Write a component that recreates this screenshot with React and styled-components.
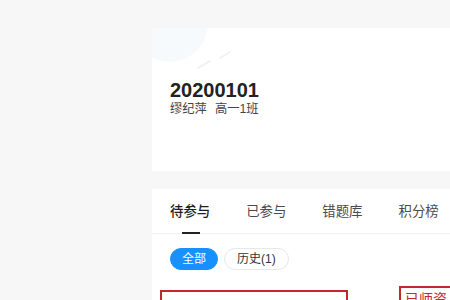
import React from 'react';
import styled, { createGlobalStyle } from 'styled-components';

const GlobalStyle = createGlobalStyle`
  html, body {
    margin: 0;
    padding: 0;
    background: #f7f7f7;
    font-family: 'Liberation Sans', 'Noto Sans CJK SC', sans-serif;
  }
`;

const Page = styled.div`
  width: 450px;
  height: 300px;
  overflow: hidden;
  padding: 28px 0 0 152px;
  box-sizing: border-box;
  display: flex;
  flex-direction: column;
  gap: 18px;
`;

const ProfileCard = styled.section`
  flex: none;
  position: relative;
  height: 143px;
  background: #fff;
  padding: 51px 0 0 18px;
  box-sizing: border-box;
  overflow: hidden;
`;

const Decoration = styled.svg`
  position: absolute;
  left: 0;
  top: 0;
  pointer-events: none;
`;

const Title = styled.h1`
  position: relative;
  margin: 0;
  font-size: 20px;
  line-height: 22px;
  font-weight: 700;
  color: #222;
`;

const Meta = styled.div`
  position: relative;
  display: flex;
  gap: 8px;
  font-size: 12.3px;
  line-height: 16px;
  color: #444;
`;

const ListCard = styled.section`
  flex: none;
  height: 200px;
  background: #fff;
  display: flex;
  flex-direction: column;
`;

const Tabs = styled.nav`
  display: flex;
  gap: 36px;
  height: 44px;
  padding-left: 18px;
  border-bottom: 1px solid #f0f0f0;
`;

const Tab = styled.div`
  position: relative;
  font-size: 13.4px;
  line-height: 45px;
  color: ${p => (p.$active ? '#1f1f1f' : '#4a4a4a')};
  font-weight: ${p => (p.$active ? 500 : 400)};

  &::after {
    content: '';
    display: ${p => (p.$active ? 'block' : 'none')};
    position: absolute;
    left: 12px;
    bottom: -1px;
    width: 18px;
    height: 2px;
    background: #222;
  }
`;

const Filters = styled.div`
  display: flex;
  gap: 6px;
  padding: 14px 0 0 18px;
`;

const Chip = styled.button`
  height: 22px;
  padding: 0 ${p => (p.$active ? '11px' : '12px')};
  border-radius: 11px;
  border: 1px solid ${p => (p.$active ? '#1890ff' : '#e8e8e8')};
  background: ${p => (p.$active ? '#1890ff' : '#fff')};
  color: ${p => (p.$active ? '#fff' : '#333')};
  font-family: inherit;
  font-size: 12px;
  line-height: 20px;
  box-sizing: border-box;
`;

const Items = styled.div`
  display: flex;
  align-items: flex-start;
  gap: 51px;
  padding: 16px 0 0 8px;
`;

const Item = styled.div`
  flex: none;
  width: ${p => p.$width}px;
  height: 60px;
  margin-top: ${p => p.$offset || 0}px;
  border: 2px solid #c0282d;
  box-sizing: border-box;
  padding: 1px 4px;
  font-size: 14px;
  line-height: 20px;
  color: #c0282d;
  white-space: nowrap;
`;

export default function App() {
  return (
    <>
      <GlobalStyle />
      <Page>
        <ProfileCard>
          <Decoration width="120" height="60" viewBox="0 0 120 60">
            <circle cx="18" cy="-4" r="38" fill="#f1f6fa" opacity="0.6" />
            <path d="M46 40 L58 33" stroke="#eef2f5" strokeWidth="2" strokeLinecap="round" />
            <path d="M68 30 L78 24" stroke="#f0f3f6" strokeWidth="2" strokeLinecap="round" />
          </Decoration>
          <Title>20200101</Title>
          <Meta>
            <span>缪纪萍</span>
            <span>高一1班</span>
          </Meta>
        </ProfileCard>
        <ListCard>
          <Tabs>
            <Tab $active>待参与</Tab>
            <Tab>已参与</Tab>
            <Tab>错题库</Tab>
            <Tab>积分榜</Tab>
          </Tabs>
          <Filters>
            <Chip $active>全部</Chip>
            <Chip>历史(1)</Chip>
          </Filters>
          <Items>
            <Item $width={188} $offset={4} />
            <Item $width={190}>已师资</Item>
          </Items>
        </ListCard>
      </Page>
    </>
  );
}
